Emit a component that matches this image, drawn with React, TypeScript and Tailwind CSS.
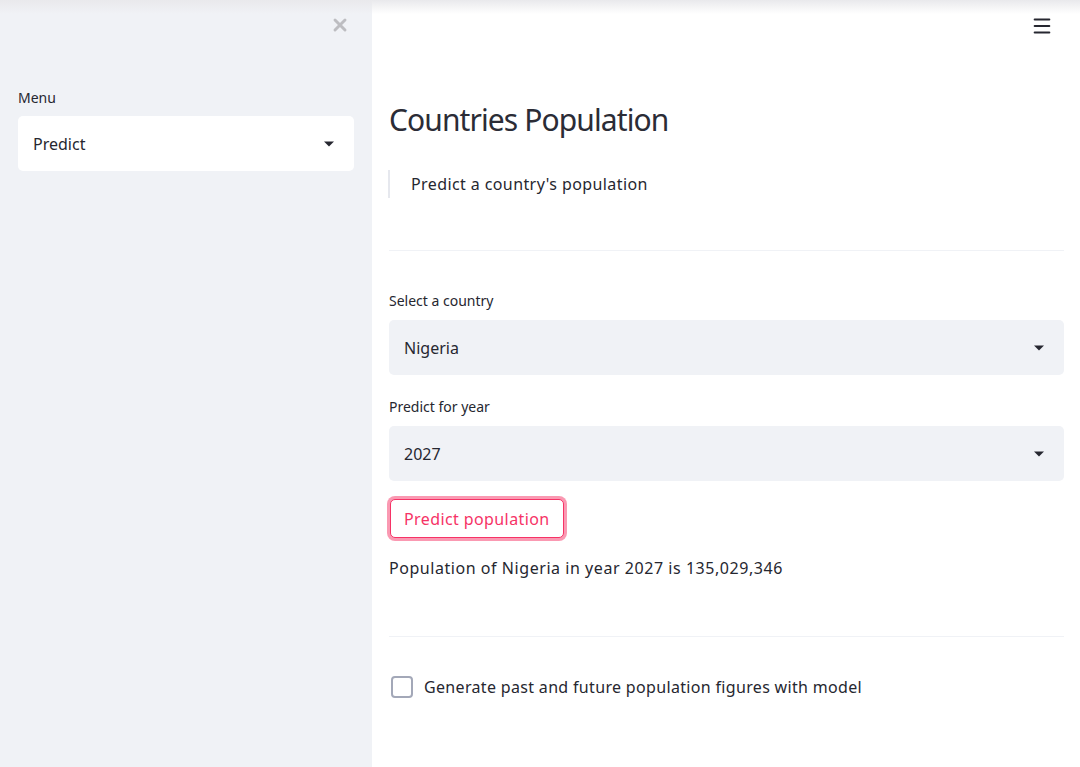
import { Menu as MenuIcon, X } from "lucide-react";

function Caret() {
  return (
    <svg width="10" height="6" viewBox="0 0 10 5" className="shrink-0">
      <path d="M0 0h10L5 5z" fill="#262730" />
    </svg>
  );
}

function SelectBox({ value, className }: { value: string; className: string }) {
  return (
    <div
      className={`flex h-[55px] items-center justify-between rounded-[5px] pl-[15px] pr-[20px] text-[16px] text-[#262730] ${className}`}
    >
      <span>{value}</span>
      <Caret />
    </div>
  );
}

export default function App() {
  return (
    <div
      className="relative flex h-[767px] w-full overflow-hidden bg-white text-[#262730]"
      style={{ fontFamily: '"Noto Sans", "Open Sans", sans-serif' }}
    >
      <div className="pointer-events-none absolute inset-x-0 top-0 h-[14px] bg-gradient-to-b from-[#e9e9ec] to-transparent" />

      <aside className="flex w-[372px] shrink-0 flex-col bg-[#f0f2f6] px-[18px]">
        <div className="flex h-[50px] items-center justify-end pr-[4px]">
          <X size={20} strokeWidth={3.5} className="text-[#bdbdc1]" />
        </div>
        <label className="mt-[38px] text-[14px] leading-[20px]">Menu</label>
        <SelectBox value="Predict" className="mt-[8px] h-[54px] bg-white" />
      </aside>

      <main className="flex flex-1 flex-col pl-[17px] pr-[16px]">
        <div className="flex h-[52px] items-center justify-end pr-[11px]">
          <MenuIcon size={22} strokeWidth={2.2} className="text-[#262730]" />
        </div>

        <h1 className="mt-[48px] text-[30px] font-normal leading-[40px] tracking-[-0.9px] text-[#2b2c36]">
          Countries Population
        </h1>

        <div className="ml-[-1px] mt-[30px] border-l-2 border-[#e6e8ee] py-[2px] pl-[21px]">
          <p className="text-[16px] leading-[24px] tracking-[0.4px]">Predict a country's population</p>
        </div>

        <hr className="mt-[52px] border-t border-[#f0f2f6]" />

        <label className="mt-[40px] text-[14px] leading-[20px]">Select a country</label>
        <SelectBox value="Nigeria" className="mt-[9px] bg-[#f0f2f6]" />

        <label className="mt-[22px] text-[14px] leading-[20px]">Predict for year</label>
        <SelectBox value="2027" className="mt-[9px] bg-[#f0f2f6]" />

        <div className="mt-[18px]">
          <button className="ml-[1px] h-[39px] rounded-[5px] border border-[#f63366] bg-white px-[13px] text-[16px] tracking-[0.4px] text-[#f63366] shadow-[0_0_0_3px_rgba(246,51,102,0.5)]">
            Predict population
          </button>
        </div>

        <p className="mt-[18px] text-[16px] leading-[24px] tracking-[0.55px]">
          Population of Nigeria in year 2027 is 135,029,346
        </p>

        <hr className="mt-[56px] border-t border-[#f0f2f6]" />

        <label className="mt-[38px] flex items-center gap-[11px] text-[16px] tracking-[0.33px]">
          <span className="ml-[2px] h-[22px] w-[22px] rounded-[4px] border-2 border-[#a3a8b8] bg-white" />
          <span>Generate past and future population figures with model</span>
        </label>
      </main>
    </div>
  );
}
